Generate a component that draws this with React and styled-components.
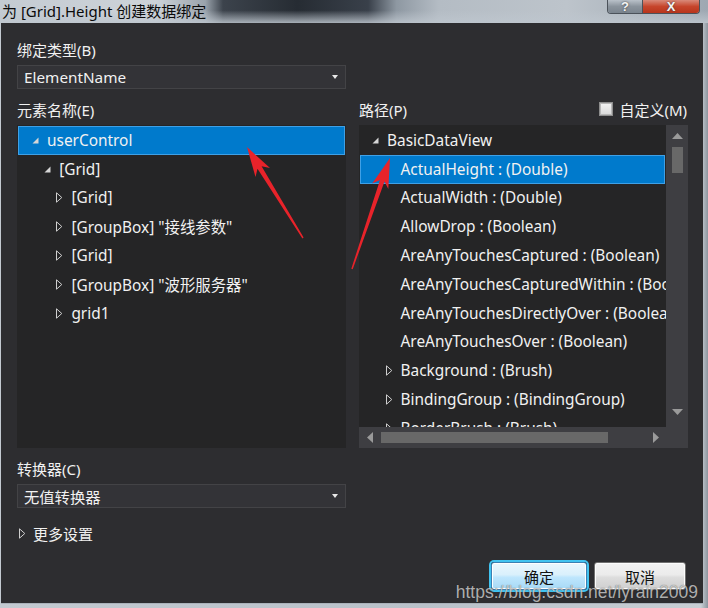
import React from 'react';
import styled, { createGlobalStyle } from 'styled-components';

const GlobalStyle = createGlobalStyle`
  html, body {
    margin: 0;
    padding: 0;
    background: #2d2d30;
  }
  body {
    font-family: "Noto Sans", "Noto Sans CJK SC", sans-serif;
  }
`;

const Window = styled.div`
  position: relative;
  width: 708px;
  height: 608px;
  overflow: hidden;
  display: flex;
  flex-direction: column;
  background: linear-gradient(90deg, #c3cad1 0%, #b9c1c9 60%, #c8ced4 99%, #8c959e 100%);
`;

const TitleBar = styled.div`
  height: 23px;
  flex: none;
  display: flex;
  align-items: flex-start;
  background:
    linear-gradient(180deg, rgba(200, 206, 212, 0) 0%, rgba(200, 206, 212, 0) 45%, rgba(190, 198, 206, 0.85) 100%),
    linear-gradient(90deg, #c4cbd2 0%, #cdd3d9 22%, #9aa3ac 29%, #3c434c 31.5%, #262c33 42%, #39404a 52%, #8e98a2 56%, #b4bcc4 62%, #bdc4cb 80%, #9ea8b2 100%);
`;

const Title = styled.div`
  flex: 1;
  padding: 1px 0 0 2px;
  font-size: 15px;
  line-height: 20px;
  color: #0a0a0a;
`;

const Caption = styled.div`
  display: flex;
  margin-right: 8px;
  border: 1px solid #4b525a;
  border-top: none;
  border-radius: 0 0 4px 4px;
  overflow: hidden;
`;

const CaptionButton = styled.div`
  width: ${(p) => p.$w}px;
  height: 13px;
  display: flex;
  align-items: center;
  justify-content: center;
  font-family: "Liberation Sans", sans-serif;
  font-weight: bold;
  font-size: 13px;
  line-height: 13px;
  color: #f4f4f4;
  text-shadow: 0 0 2px #333;
  background: ${(p) =>
    p.$close
      ? 'linear-gradient(180deg, #d98a7a 0%, #c6452c 50%, #b8351c 100%)'
      : 'linear-gradient(180deg, #b9c1c9 0%, #8a939c 50%, #7a848e 100%)'};
  & + & {
    border-left: 1px solid #4b525a;
  }
`;

const Panel = styled.div`
  flex: 1;
  margin: 0 5px 4px 1px;
  padding: 0 15px 0 16px;
  background: #2d2d30;
  color: #f1f1f1;
  display: flex;
  flex-direction: column;
  border-bottom: 1px solid #aab2ba;
`;

const Label = styled.div`
  height: 18px;
  line-height: 18px;
  font-size: 15px;
  margin-top: ${(p) => p.$top}px;
  white-space: nowrap;
`;

const Combo = styled.div`
  width: 329px;
  height: 24px;
  box-sizing: border-box;
  margin-top: 6px;
  padding: 0 7px 0 6px;
  display: flex;
  align-items: center;
  justify-content: space-between;
  background: #333337;
  border: 1px solid #434346;
  font-size: 15.3px;
`;

const DropArrow = styled.span`
  width: 0;
  height: 0;
  border-left: 3.5px solid transparent;
  border-right: 3.5px solid transparent;
  border-top: 4px solid #e8e8e8;
`;

const Columns = styled.div`
  display: grid;
  grid-template-columns: 329px 329px;
  column-gap: 13px;
`;

const HeaderRow = styled.div`
  display: flex;
  align-items: center;
  justify-content: space-between;
  margin-top: 11px;
  height: 18px;
  font-size: 15px;
`;

const Custom = styled.label`
  display: flex;
  align-items: center;
  gap: 6px;
  margin-right: 1px;
`;

const CheckBox = styled.span`
  width: 12px;
  height: 12px;
  border: 1px solid #8d8d8d;
  background: linear-gradient(180deg, #f4f4f4 0%, #d8d8d8 100%);
  box-shadow: inset 0 0 0 1px #b8b8b8;
`;

const TreeBox = styled.div`
  margin-top: 7px;
  height: 323px;
  background: #252526;
  overflow: hidden;
  padding-top: 1px;
  box-sizing: border-box;
`;

const PathBox = styled.div`
  margin-top: 7px;
  height: 323px;
  display: grid;
  grid-template-columns: 1fr 22px;
  grid-template-rows: 1fr 21px;
  background: #3e3e42;
`;

const PathList = styled.div`
  background: #252526;
  overflow: hidden;
  padding: 1px 0 0 1px;
`;

const Row = styled.div`
  height: 28.8px;
  box-sizing: border-box;
  display: flex;
  align-items: center;
  padding-left: ${(p) => p.$base + p.$level * p.$step}px;
  margin: 0 1px 0 ${(p) => (p.$flush ? 0 : 1)}px;
  font-size: 15.4px;
  white-space: nowrap;
  color: #f1f1f1;
  background: ${(p) => (p.$selected ? '#007acc' : 'transparent')};
  box-shadow: ${(p) => (p.$selected ? 'inset 0 0 0 1px #3fa0e6' : 'none')};
`;

const Toggle = styled.span`
  width: 15px;
  flex: none;
  display: flex;
  align-items: center;
  padding-left: 1px;
`;

const VScroll = styled.div`
  display: flex;
  flex-direction: column;
  align-items: center;
  padding-top: 8px;
`;

const Thumb = styled.div`
  width: ${(p) => (p.$h ? 'auto' : '11px')};
  height: ${(p) => (p.$h ? '11px' : '26px')};
  flex: ${(p) => (p.$h ? '0 0 227px' : 'none')};
  background: #686868;
`;

const HScroll = styled.div`
  display: flex;
  align-items: center;
  padding-left: 8px;
`;

const Gap = styled.div`
  flex: none;
  width: ${(p) => p.$w || 0}px;
  height: ${(p) => p.$h || 0}px;
`;

const Spacer = styled.div`
  flex: 1;
`;

const More = styled.div`
  display: flex;
  align-items: center;
  gap: 7px;
  margin-top: 16px;
  padding-left: 2px;
  height: 18px;
  font-size: 15px;
`;

const Buttons = styled.div`
  display: flex;
  justify-content: flex-end;
  gap: 7px;
  margin-top: 20px;
  padding-right: 2px;
`;

const Button = styled.div`
  width: ${(p) => p.$w}px;
  height: 28px;
  box-sizing: border-box;
  display: flex;
  align-items: center;
  justify-content: center;
  font-size: 15px;
  color: #111;
  border-radius: 3px;
  border: 1px solid ${(p) => (p.$default ? '#3c7fb1' : '#707070')};
  background: ${(p) =>
    p.$default
      ? 'linear-gradient(180deg, #eaf6fd 0%, #d9f0fc 45%, #bee6fd 55%, #a7d9f5 100%)'
      : 'linear-gradient(180deg, #f2f2f2 0%, #ebebeb 45%, #dddddd 55%, #cfcfcf 100%)'};
  box-shadow: ${(p) => (p.$default ? '0 0 0 2px #41c3f0, inset 0 0 0 1px #ffffff' : 'inset 0 0 0 1px #fcfcfc')};
`;

const Watermark = styled.div`
  position: absolute;
  right: 10px;
  bottom: 6px;
  font-family: "Liberation Sans", sans-serif;
  font-size: 17.5px;
  line-height: 20px;
  color: rgba(235, 235, 235, 0.72);
  text-shadow: 0 0 1px rgba(0, 0, 0, 0.6);
  pointer-events: none;
`;

const Overlay = styled.svg`
  position: absolute;
  left: 0;
  top: 0;
  pointer-events: none;
`;

const Expanded = () => (
  <svg width="7" height="7" viewBox="0 0 7 7">
    <path d="M6.5 0.5 V6.5 H0.5 Z" fill="#d6d6d6" />
  </svg>
);

const Collapsed = () => (
  <svg width="7" height="11" viewBox="0 0 7 11">
    <path d="M0.5 0.8 L5.8 5.5 L0.5 10.2 Z" fill="none" stroke="#cfcfcf" strokeWidth="1" />
  </svg>
);

const Tri = ({ dir }) => {
  const d = {
    up: 'M0 6 L5.5 0 L11 6 Z',
    down: 'M0 0 L11 0 L5.5 6 Z',
    left: 'M6 0 L6 11 L0 5.5 Z',
    right: 'M0 0 L6 5.5 L0 11 Z',
  }[dir];
  const vertical = dir === 'up' || dir === 'down';
  return (
    <svg width={vertical ? 11 : 6} height={vertical ? 6 : 11} viewBox={vertical ? '0 0 11 6' : '0 0 6 11'}>
      <path d={d} fill="#9a9a9a" />
    </svg>
  );
};

const elements = [
  { text: 'userControl', level: 0, state: 'open', selected: true },
  { text: '[Grid]', level: 1, state: 'open' },
  { text: '[Grid]', level: 2, state: 'closed' },
  { text: '[GroupBox] "接线参数"', level: 2, state: 'closed' },
  { text: '[Grid]', level: 2, state: 'closed' },
  { text: '[GroupBox] "波形服务器"', level: 2, state: 'closed' },
  { text: 'grid1', level: 2, state: 'closed' },
];

const paths = [
  { text: 'BasicDataView', level: 0, state: 'open' },
  { text: 'ActualHeight : (Double)', level: 1, selected: true },
  { text: 'ActualWidth : (Double)', level: 1 },
  { text: 'AllowDrop : (Boolean)', level: 1 },
  { text: 'AreAnyTouchesCaptured : (Boolean)', level: 1 },
  { text: 'AreAnyTouchesCapturedWithin : (Boolean)', level: 1 },
  { text: 'AreAnyTouchesDirectlyOver : (Boolean)', level: 1 },
  { text: 'AreAnyTouchesOver : (Boolean)', level: 1 },
  { text: 'Background : (Brush)', level: 1, state: 'closed' },
  { text: 'BindingGroup : (BindingGroup)', level: 1, state: 'closed' },
  { text: 'BorderBrush : (Brush)', level: 1, state: 'closed' },
];

const TreeRow = ({ item, base, step, flush }) => (
  <Row $level={item.level} $base={base} $step={step} $selected={item.selected} $flush={flush}>
    <Toggle>
      {item.state === 'open' && <Expanded />}
      {item.state === 'closed' && <Collapsed />}
    </Toggle>
    {item.text}
  </Row>
);

const arrowPoints = (x1, y1, x2, y2) => {
  const dx = x2 - x1;
  const dy = y2 - y1;
  const len = Math.hypot(dx, dy);
  const ux = dx / len;
  const uy = dy / len;
  const nx = -uy;
  const ny = ux;
  const p = (d, w) => `${(x2 - ux * d + nx * w).toFixed(1)},${(y2 - uy * d + ny * w).toFixed(1)}`;
  return [p(0, 0), p(30, 8.5), p(24, 2.4), p(len, 0.7), p(len, -0.7), p(24, -2.4), p(30, -8.5)].join(' ');
};

const App = () => {
  return (
    <>
      <GlobalStyle />
      <Window>
        <TitleBar>
          <Title>为 [Grid].Height 创建数据绑定</Title>
          <Caption>
            <CaptionButton $w={34}>?</CaptionButton>
            <CaptionButton $w={56} $close>X</CaptionButton>
          </Caption>
        </TitleBar>
        <Panel>
          <Label $top={18}>绑定类型(B)</Label>
          <Combo>
            ElementName
            <DropArrow />
          </Combo>
          <Columns>
            <div>
              <HeaderRow>元素名称(E)</HeaderRow>
              <TreeBox>
                {elements.map((item, i) => (
                  <TreeRow key={i} item={item} base={13} step={12.2} />
                ))}
              </TreeBox>
            </div>
            <div>
              <HeaderRow>
                <span>路径(P)</span>
                <Custom>
                  <CheckBox />
                  自定义(M)
                </Custom>
              </HeaderRow>
              <PathBox>
                <PathList>
                  {paths.map((item, i) => (
                    <TreeRow key={i} item={item} base={11} step={13.5} flush />
                  ))}
                </PathList>
                <VScroll>
                  <Tri dir="up" />
                  <Gap $h={8} />
                  <Thumb />
                  <Spacer />
                  <Tri dir="down" />
                  <Gap $h={12} />
                </VScroll>
                <HScroll>
                  <Tri dir="left" />
                  <Gap $w={8} />
                  <Thumb $h />
                  <Spacer />
                  <Tri dir="right" />
                  <Gap $w={7} />
                </HScroll>
                <div />
              </PathBox>
            </div>
          </Columns>
          <Label $top={12}>转换器(C)</Label>
          <Combo>
            无值转换器
            <DropArrow />
          </Combo>
          <More>
            <Collapsed />
            更多设置
          </More>
          <Buttons>
            <Button $w={96} $default>确定</Button>
            <Button $w={92}>取消</Button>
          </Buttons>
        </Panel>
        <Watermark>https://blog.csdn.net/lyrain2009</Watermark>
        <Overlay width="708" height="608" viewBox="0 0 708 608">
          <polygon points={arrowPoints(303, 238, 247, 147)} fill="#e8232a" />
          <polygon points={arrowPoints(352, 269, 390, 158)} fill="#e8232a" />
        </Overlay>
      </Window>
    </>
  );
};

export default App;
